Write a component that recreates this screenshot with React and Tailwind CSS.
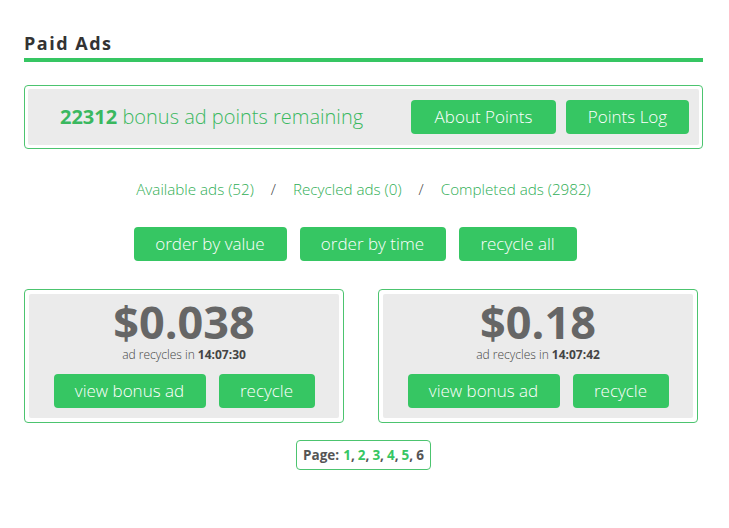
import React from 'react';

const green = 'bg-[#36c663]';

function Btn({ children, className = '' }) {
  return (
    <button className={`${green} text-white font-light text-[17px] h-[34px] rounded-[4px] ${className}`}>
      {children}
    </button>
  );
}

function AdCard({ value, time }) {
  return (
    <div className="w-[320px] h-[134px] border border-[#4cc46f] rounded-[4px] p-[4px]">
      <div className="h-full bg-[#ebebeb] rounded-[2px] flex flex-col items-center">
        <div className="mt-[8px] text-[45px] leading-[40px] font-bold text-[#666]">{value}</div>
        <div className="mt-[5px] text-[12px] leading-[16px] font-light text-[#444]">
          ad recycles in <span className="font-bold">{time}</span>
        </div>
        <div className="mt-[11px] flex gap-[13px]">
          <Btn className="w-[152px]">view bonus ad</Btn>
          <Btn className="w-[96px]">recycle</Btn>
        </div>
      </div>
    </div>
  );
}

const pages = ['1', '2', '3', '4', '5'];

export default function App() {
  return (
    <div className="w-[729px] h-[528px] bg-white font-['Open_Sans',sans-serif]">
      <div className="ml-[24px] w-[679px] pt-[31px]">
        {/* Header */}
        <h1 className="text-[18px] leading-[24px] font-bold text-[#333] tracking-[1.5px]">Paid Ads</h1>
        <div className="mt-[3px] h-[4px] bg-[#36c663]" />

        {/* Points summary */}
        <div className="mt-[23px] border border-[#4cc46f] rounded-[4px] p-[3px]">
          <div className="h-[56px] bg-[#ebebeb] rounded-[2px] flex items-center pl-[32px] pr-[10px]">
            <div className="flex-1 text-[20px] font-light text-[#3ab85f]">
              <span className="font-bold">22312</span> bonus ad points remaining
            </div>
            <div className="flex gap-[10px]">
              <Btn className="w-[145px]">About Points</Btn>
              <Btn className="w-[123px]">Points Log</Btn>
            </div>
          </div>
        </div>

        {/* Tabs */}
        <div className="mt-[30px] flex justify-center items-center text-[15.2px] leading-[20px] font-light text-[#2fae55]">
          <span>Available ads (52)</span>
          <span className="mx-[17px] text-[#444]">/</span>
          <span>Recycled ads (0)</span>
          <span className="mx-[17px] text-[#444]">/</span>
          <span>Completed ads (2982)</span>
        </div>

        {/* Sort actions */}
        <div className="mt-[28px] flex justify-center gap-[13px] pr-[17px]">
          <Btn className="w-[153px]">order by value</Btn>
          <Btn className="w-[146px]">order by time</Btn>
          <Btn className="w-[118px]">recycle all</Btn>
        </div>

        {/* Ads */}
        <div className="mt-[28px] flex gap-[34px]">
          <AdCard value="$0.038" time="14:07:30" />
          <AdCard value="$0.18" time="14:07:42" />
        </div>

        {/* Pagination */}
        <div className="mt-[17px] flex justify-center">
          <div className="h-[30px] w-[135px] border border-[#4cc46f] rounded-[4px] flex items-center justify-center text-[13.5px] font-bold text-[#555]">
            <span className="mr-[4px]">Page:</span>
            {pages.map((p) => (
              <span key={p} className="mr-[3px]">
                <span className="text-[#36c663]">{p}</span>,
              </span>
            ))}
            <span>6</span>
          </div>
        </div>
      </div>
    </div>
  );
}
